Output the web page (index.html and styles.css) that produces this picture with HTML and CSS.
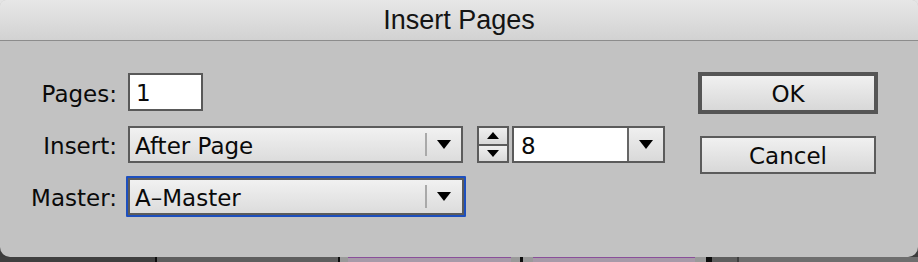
FILE: index.html
```html
<!DOCTYPE html>
<html lang="en">
<head>
  <meta charset="UTF-8" />
  <title>Insert Pages</title>
  <link rel="stylesheet" href="styles.css">
</head>
<body>
  <div class="dialog">
    <div class="titlebar">Insert Pages</div>

    <div class="content">
      <div class="form">
        <div class="line first">
          <span class="label">Pages:</span>
          <div class="textbox pages">1</div>
        </div>

        <div class="line second">
          <span class="label">Insert:</span>
          <div class="select insert">
            <span class="value">After Page</span>
            <span class="sep"></span>
            <span class="arrow"></span>
          </div>
          <div class="spinner">
            <span class="half"><span class="tri-up"></span></span>
            <span class="half"><span class="tri-down"></span></span>
          </div>
          <div class="combo">
            <span class="value">8</span>
            <span class="drop"><span class="arrow"></span></span>
          </div>
        </div>

        <div class="line third">
          <span class="label">Master:</span>
          <div class="focus">
            <div class="select master">
              <span class="value">A&ndash;Master</span>
              <span class="sep"></span>
              <span class="arrow"></span>
            </div>
          </div>
        </div>
      </div>

      <div class="buttons">
        <div class="button ok">OK</div>
        <div class="button cancel">Cancel</div>
      </div>
    </div>
  </div>

  <!-- document behind the dialog -->
  <div class="desk">
    <span class="seg dark" style="width:155px"></span>
    <span class="seg black" style="width:2px"></span>
    <span class="seg mid" style="width:181px"></span>
    <span class="seg black" style="width:2px"></span>
    <span class="seg paper" style="width:8px"></span>
    <span class="seg frame" style="width:163px"></span>
    <span class="seg paper" style="width:9px"></span>
    <span class="seg black" style="width:3px"></span>
    <span class="seg paper" style="width:10px"></span>
    <span class="seg frame" style="width:162px"></span>
    <span class="seg paper" style="width:11px"></span>
    <span class="seg black" style="width:6px"></span>
    <span class="seg mid" style="width:25px"></span>
    <span class="seg dark" style="width:2px"></span>
    <span class="seg light" style="width:179px"></span>
  </div>
</body>
</html>
```

FILE: styles.css
```css
body {
  margin: 0;
  width: 918px;
  height: 262px;
  overflow: hidden;
  background: linear-gradient(#e4e4e4 0, #e4e4e4 150px, #3c3c3c 150px);
  font-family: "DejaVu Sans", sans-serif;
  font-size: 23px;
  color: #0a0a0a;
}

.dialog {
  height: 257px;
  background: #c2c2c2;
  border-radius: 6px 6px 10px 10px;
  overflow: hidden;
}

.titlebar {
  height: 40px;
  border-bottom: 1px solid #8c8c8c;
  background: linear-gradient(#e7e7e7, #d2d2d2);
  font-family: "Liberation Sans", Arial, sans-serif;
  font-size: 27px;
  line-height: 40px;
  text-align: center;
  color: #141414;
}

.content {
  display: flex;
}

.form {
  display: flex;
  flex-direction: column;
}

.line {
  display: flex;
  align-items: center;
}

.line.first { margin-top: 32px; height: 38px; }
.line.second { margin-top: 15px; height: 37px; }
.line.third { margin-top: 13px; height: 41px; }

.label {
  width: 117px;
  margin-right: 11px;
  text-align: right;
  padding-top: 3px;
}

.textbox {
  box-sizing: border-box;
  height: 38px;
  border: 2px solid #595959;
  background: #fff;
  padding: 3px 0 0 6px;
  line-height: 31px;
}

.pages { width: 75px; }

.select {
  box-sizing: border-box;
  display: flex;
  align-items: center;
  height: 37px;
  border: 2px solid #5b5b5b;
  background: linear-gradient(#f1f1f1, #dcdcdc);
}

.select .value {
  flex: 1;
  padding: 3px 0 0 5px;
}

.select .sep {
  width: 2px;
  height: 23px;
  background: #a9a9a9;
}

.arrow {
  width: 0;
  height: 0;
  border-left: 7px solid transparent;
  border-right: 7px solid transparent;
  border-top: 9px solid #000;
}

.select .arrow {
  margin: 0 10px 0 10px;
}

.insert { width: 335px; }

.spinner {
  box-sizing: border-box;
  width: 32px;
  height: 37px;
  margin-left: 14px;
  border: 2px solid #5b5b5b;
  display: flex;
  flex-direction: column;
  background: #5b5b5b;
  gap: 2px;
}

.spinner .half {
  flex: 1;
  display: flex;
  align-items: center;
  justify-content: center;
  background: linear-gradient(#efefef, #d9d9d9);
}

.tri-up {
  border-left: 6px solid transparent;
  border-right: 6px solid transparent;
  border-bottom: 7px solid #000;
}

.tri-down {
  border-left: 6px solid transparent;
  border-right: 6px solid transparent;
  border-top: 7px solid #000;
}

.combo {
  box-sizing: border-box;
  display: flex;
  width: 153px;
  height: 37px;
  margin-left: 3px;
  border: 2px solid #5b5b5b;
}

.combo .value {
  flex: 1;
  background: #fff;
  padding: 3px 0 0 7px;
  line-height: 30px;
  border-right: 2px solid #666;
}

.combo .drop {
  width: 34px;
  display: flex;
  align-items: center;
  justify-content: center;
  background: linear-gradient(#efefef, #d9d9d9);
}

.focus {
  margin-left: -2px;
  border: 2px solid #1d4fbe;
  border-radius: 1px;
}

.master {
  width: 336px;
}

.master .arrow {
  margin-right: 11px;
}

.buttons {
  display: flex;
  flex-direction: column;
  align-items: center;
  width: 180px;
  margin-left: auto;
  margin-right: 40px;
  padding-top: 31px;
}

.button {
  box-sizing: border-box;
  background: linear-gradient(#f0f0f0, #d8d8d8);
  text-align: center;
  padding-top: 3px;
}

.ok {
  width: 180px;
  height: 42px;
  border: 4px solid #555;
  line-height: 31px;
}

.cancel {
  width: 176px;
  height: 38px;
  margin-top: 22px;
  border: 2px solid #5b5b5b;
  line-height: 31px;
}

.desk {
  display: flex;
  height: 5px;
}

.seg { height: 5px; }
.seg.dark { background: #3f3f3f; }
.seg.black { background: #0d0d0d; }
.seg.mid { background: #5e5e5e; }
.seg.light { background: #6e6e6e; }
.seg.paper { background: #9a9a9a; }
.seg.frame {
  box-sizing: border-box;
  background: #a79aa9;
  border-top: 1px solid #8a4f9a;
}
```
